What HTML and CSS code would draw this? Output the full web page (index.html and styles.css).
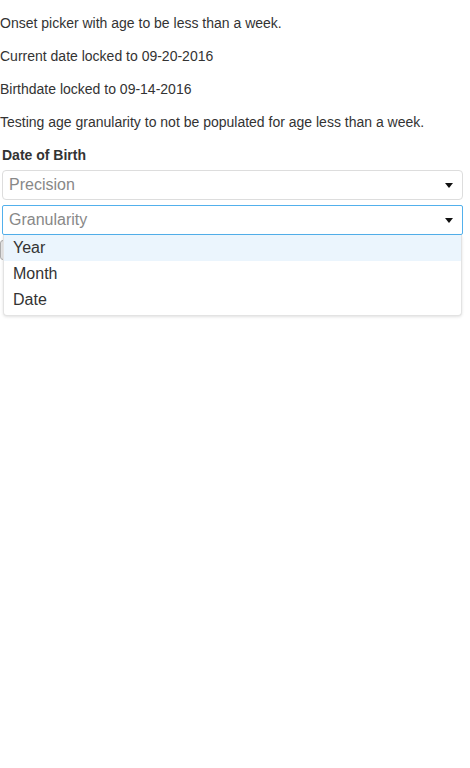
FILE: index.html
```html
<!DOCTYPE html>
<html>
<head>
<meta charset="utf-8">
<link rel="stylesheet" href="styles.css">
</head>
<body>
<p class="note">Onset picker with age to be less than a week.</p>
<p class="note">Current date locked to 09-20-2016</p>
<p class="note">Birthdate locked to 09-14-2016</p>
<p class="note">Testing age granularity to not be populated for age less than a week.</p>
<div class="form">
  <label class="label">Date of Birth</label>
  <div class="select">
    <span class="placeholder">Precision</span>
    <span class="caret"></span>
  </div>
  <div class="select-wrap">
    <div class="select open">
      <span class="placeholder">Granularity</span>
      <span class="caret"></span>
    </div>
    <ul class="menu">
      <li class="option active">Year</li>
      <li class="option">Month</li>
      <li class="option">Date</li>
    </ul>
  </div>
</div>
<div class="btn"></div>
</body>
</html>
```
FILE: styles.css
```css
html, body {
  margin: 0;
  padding: 0;
  background: #fff;
}
body {
  min-height: 100vh;
  font-family: "Liberation Sans", Arial, sans-serif;
  font-size: 14px;
  line-height: 20px;
  color: #333;
}
.note {
  margin: 13px 0;
}
.form {
  padding: 0 7px 0 2px;
  display: flex;
  flex-direction: column;
}
.label {
  display: block;
  font-weight: bold;
  margin-bottom: 5px;
}
.select {
  box-sizing: border-box;
  height: 30px;
  border: 1px solid #ddd;
  border-radius: 4px;
  display: flex;
  align-items: center;
  justify-content: space-between;
  padding: 0 9px 0 6px;
  font-size: 16px;
  background: #fff;
}
.select-wrap {
  position: relative;
  margin-top: 5px;
}
.select.open {
  border-color: #52b0ec;
  border-radius: 2px;
}
.placeholder {
  color: #888;
}
.caret {
  width: 0;
  height: 0;
  border-left: 4.5px solid transparent;
  border-right: 4.5px solid transparent;
  border-top: 5px solid #111;
}
.menu {
  position: absolute;
  left: 1px;
  right: 1px;
  top: 30px;
  margin: 0;
  padding: 0 0 2px;
  list-style: none;
  background: #fff;
  border: 1px solid #e3e3e3;
  border-top: none;
  border-radius: 0 0 4px 4px;
  box-shadow: 0 1px 3px rgba(0, 0, 0, 0.12);
  z-index: 2;
}
.option {
  height: 26px;
  line-height: 26px;
  padding: 0 9px;
  font-size: 16px;
  color: #333;
}
.option.active {
  background: #ebf5fd;
}
.btn {
  margin-top: 5px;
  width: 60px;
  height: 20px;
  box-sizing: border-box;
  border: 1px solid #adadad;
  border-radius: 3px;
  background: #e6e6e6;
}
```
